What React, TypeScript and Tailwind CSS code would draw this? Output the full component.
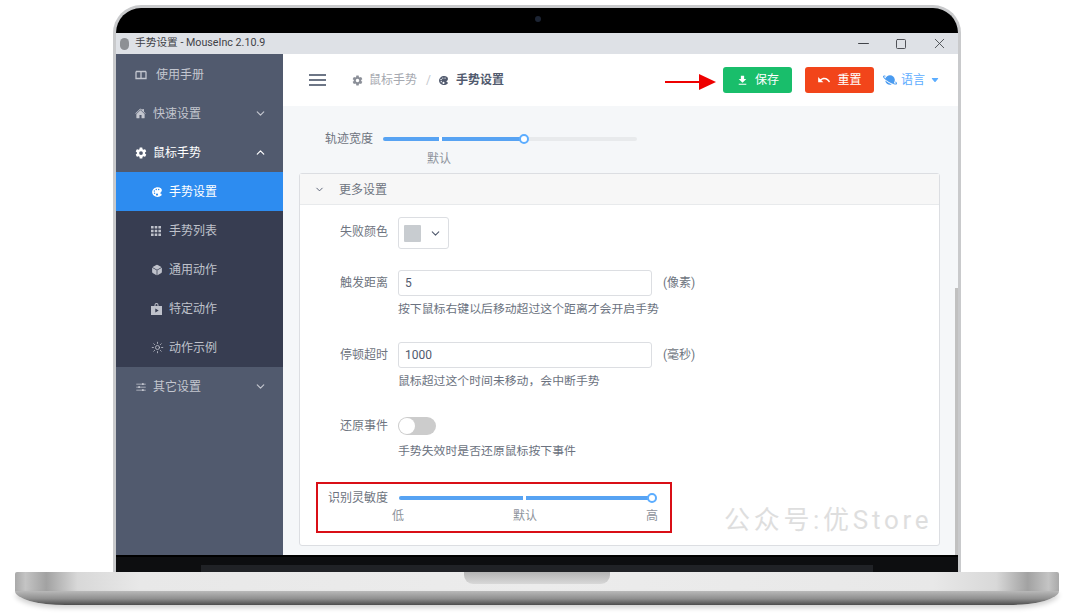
import { ChevronDown, ChevronUp, Minus, Square, X } from "lucide-react";
import { IoCaretDown, IoColorPalette, IoCube, IoHome, IoOptions, IoPlanet, IoSettingsSharp, IoSunnyOutline } from "react-icons/io5";
import { MdFileDownload, MdUndo } from "react-icons/md";

const cjk = "font-['Roboto','Noto_Sans_CJK_SC',sans-serif]";

function BookIcon() {
  return (
    <svg width="12" height="10" viewBox="0 0 12 10" fill="none" stroke="currentColor" strokeWidth="1.3">
      <path d="M1 1.5h4.2c.5 0 .8.3.8.8v6.2M11 1.5H6.8c-.5 0-.8.3-.8.8M1 1.5v7h10v-7" />
    </svg>
  );
}

function BagIcon() {
  return (
    <svg width="11" height="12" viewBox="0 0 11 12">
      <path fill="currentColor" fillRule="evenodd" d="M3.5 3V2a2 2 0 0 1 4 0v1H11v9H0V3zM4.5 3h2V2a1 1 0 0 0-2 0zM4.3 5.5v4l3.4-2z" />
    </svg>
  );
}

function GridIcon() {
  return (
    <svg width="10" height="10" viewBox="0 0 10 10" fill="currentColor">
      <path d="M0 0h2.6v2.6H0zM3.7 0h2.6v2.6H3.7zM7.4 0H10v2.6H7.4zM0 3.7h2.6v2.6H0zM3.7 3.7h2.6v2.6H3.7zM7.4 3.7H10v2.6H7.4zM0 7.4h2.6V10H0zM3.7 7.4h2.6V10H3.7zM7.4 7.4H10V10H7.4z" />
    </svg>
  );
}

function GroupRow({ icon, label, open, active }: { icon: React.ReactNode; label: string; open?: boolean; active?: boolean }) {
  return (
    <div className={`flex h-[39px] items-center pl-[19px] pr-[16px] ${active ? "text-white" : "text-[#c3c6cf]"}`}>
      <span className="flex w-[18px] justify-start">{icon}</span>
      <span className="flex-1">{label}</span>
      {open ? <ChevronUp size={13} strokeWidth={2.2} /> : <ChevronDown size={13} strokeWidth={2.2} />}
    </div>
  );
}

function SubRow({ icon, label, active }: { icon: React.ReactNode; label: string; active?: boolean }) {
  return (
    <div className={`flex h-[39px] items-center pl-[35px] ${active ? "bg-[#2d8cf0] text-white" : "text-[#bfc2cb]"}`}>
      <span className="flex w-[18px] justify-start">{icon}</span>
      <span>{label}</span>
    </div>
  );
}

function Slider({ width, value, tick }: { width: number; value: number; tick: number }) {
  return (
    <div className="relative h-[4px] rounded-full bg-[#e8eaec]" style={{ width }}>
      <div className="h-full rounded-full bg-[#57a3f3]" style={{ width: value }} />
      <div className="absolute top-0 h-full w-[3px] bg-white" style={{ left: tick }} />
      <div className="absolute top-[-3px] h-[10px] w-[10px] rounded-full border-2 border-[#5cadff] bg-white" style={{ left: value - 5 }} />
    </div>
  );
}

function Field({ label, value, unit, help }: { label: string; value: string; unit: string; help: string }) {
  return (
    <div className="flex">
      <span className="w-[98px] pr-[10px] pt-[3px] text-right leading-[20px]">{label}</span>
      <div>
        <div className="flex items-center">
          <div className="flex h-[26px] w-[254px] items-center rounded-[3px] border border-[#dcdee2] bg-white pl-[6px] text-[#515a6e]">{value}</div>
          <span className="ml-[11px]">{unit}</span>
        </div>
        <div className="mt-[3px] text-[11.87px] leading-[20px] text-[#6b7280]">{help}</div>
      </div>
    </div>
  );
}

export default function App() {
  return (
    <div className={`relative flex h-[614px] w-[1080px] flex-col items-center overflow-hidden bg-white pr-[6px] pt-[5px] text-[12px] text-[#6e7480] ${cjk}`}>
      {/* lid */}
      <div className="relative flex h-[567px] w-[848px] flex-col items-center rounded-t-[28px] border-x-[3px] border-t-[3px] border-[#c9cacc] bg-black">
        <div className="flex h-[25px] w-full items-center justify-center pb-[3px] pl-[2px]">
          <div className="h-[6px] w-[6px] rounded-full bg-[#1c2433]" />
        </div>

        {/* window */}
        <div className="flex h-[522px] w-full flex-col overflow-hidden bg-white">
          <div className="flex h-[21px] shrink-0 items-center bg-[#dee1e6] pl-[4px] text-[10.7px] text-[#3f4247]">
            <div className="h-[12px] w-[9px] rounded-full bg-[#8d9094]" />
            <span className="ml-[6px] flex-1">手势设置 - MouseInc 2.10.9</span>
            <span className="flex w-[38px] justify-center"><Minus size={17} strokeWidth={1.4} /></span>
            <span className="flex w-[38px] justify-center"><Square size={12} strokeWidth={1.8} /></span>
            <span className="flex w-[38px] justify-center"><X size={17} strokeWidth={1.2} /></span>
          </div>

          <div className="relative flex min-h-0 flex-1">
            <aside className="flex w-[167px] shrink-0 flex-col bg-[#515a6e] pt-px">
              <div className="flex h-[39px] items-center pl-[19px] text-[#c3c6cf]">
                <span className="flex w-[21px] justify-start"><BookIcon /></span>
                <span>使用手册</span>
              </div>
              <GroupRow icon={<IoHome size={11} />} label="快速设置" />
              <GroupRow icon={<IoSettingsSharp size={12} />} label="鼠标手势" open active />
              <SubRow icon={<IoColorPalette size={12} />} label="手势设置" active />
              <div className="bg-[#373d51]">
                <SubRow icon={<GridIcon />} label="手势列表" />
                <SubRow icon={<IoCube size={12} />} label="通用动作" />
                <SubRow icon={<BagIcon />} label="特定动作" />
                <SubRow icon={<IoSunnyOutline size={13} />} label="动作示例" />
              </div>
              <GroupRow icon={<IoOptions size={12} />} label="其它设置" />
            </aside>

            <main className="flex min-w-0 flex-1 flex-col bg-[#f5f7f9]">
              <header className="flex h-[52px] shrink-0 items-center bg-white pl-[26px] pr-[18px]">
                <div className="flex w-[17px] flex-col gap-[3px]">
                  <div className="h-[2px] bg-[#6d7686]" />
                  <div className="h-[2px] bg-[#6d7686]" />
                  <div className="h-[2px] bg-[#6d7686]" />
                </div>
                <IoSettingsSharp size={11} className="ml-[26px] text-[#8b8f98]" />
                <span className="ml-[6px] text-[#a6a9b0]">鼠标手势</span>
                <span className="ml-[9px] text-[#c5c8ce]">/</span>
                <IoColorPalette size={11} className="ml-[7px] text-[#515a6e]" />
                <span className="ml-[7px] font-bold text-[#515a6e]">手势设置</span>
                <div className="flex-1" />
                <div className="flex h-[26px] w-[69px] items-center justify-center rounded-[3px] bg-[#19be6b] text-white">
                  <MdFileDownload size={13} />
                  <span className="ml-[6px]">保存</span>
                </div>
                <div className="ml-[13px] flex h-[26px] w-[69px] items-center justify-center rounded-[3px] bg-[#f2451a] text-white">
                  <MdUndo size={14} />
                  <span className="ml-[6px]">重置</span>
                </div>
                <div className="ml-[9px] flex items-center text-[#5cadff]">
                  <IoPlanet size={14} className="text-[#4a9bf0]" />
                  <span className="ml-[4px]">语言</span>
                  <IoCaretDown size={10} className="ml-[5px]" />
                </div>
              </header>

              <div className="flex flex-1 flex-col pl-[16px] pr-[18px]">
                <div className="mt-[23px] flex items-center pl-[26px] text-[#6e7480]">
                  <span className="w-[58px] leading-[20px]">轨迹宽度</span>
                  <Slider width={254} value={141} tick={56} />
                </div>
                <div className="ml-[128px] mt-[2px] leading-[16px] text-[#8e939c]">默认</div>

                <section className="mt-[6px] flex h-[373px] flex-col rounded-[3px] border border-[#dcdee2] bg-white">
                  <div className="flex h-[31px] shrink-0 items-center border-b border-[#e8eaec] bg-[#f7f7f7] pl-[14px] pt-px">
                    <ChevronDown size={11} className="text-[#515a6e]" />
                    <span className="ml-[14px]">更多设置</span>
                  </div>

                  <div className="flex pt-[12px]">
                    <span className="w-[98px] pr-[10px] pt-[5px] text-right leading-[20px]">失败颜色</span>
                    <div className="flex h-[32px] w-[51px] items-center rounded-[3px] border border-[#dcdee2] pl-[5px]">
                      <div className="h-[17px] w-[17px] rounded-[1px] bg-[#c8ccd0]" />
                      <ChevronDown size={13} className="ml-[8px] text-[#515a6e]" />
                    </div>
                  </div>

                  <div className="mt-[21px]">
                    <Field label="触发距离" value="5" unit="(像素)" help="按下鼠标右键以后移动超过这个距离才会开启手势" />
                  </div>
                  <div className="mt-[23px]">
                    <Field label="停顿超时" value="1000" unit="(毫秒)" help="鼠标超过这个时间未移动，会中断手势" />
                  </div>

                  <div className="mt-[26px] flex">
                    <span className="w-[98px] pr-[10px] text-right leading-[18px]">还原事件</span>
                    <div>
                      <div className="flex h-[18px] w-[38px] items-center rounded-full bg-[#ccc] pl-[1px]">
                        <div className="h-[16px] w-[16px] rounded-full bg-white" />
                      </div>
                      <div className="mt-[6px] text-[11.87px] leading-[20px] text-[#6b7280]">手势失效时是否还原鼠标按下事件</div>
                    </div>
                  </div>

                  <div className="ml-[16px] mt-[21px] h-[51px] w-[356px] border-2 border-[#d90f17] pl-[10px] pt-[4px]">
                    <div className="flex items-center">
                      <span className="w-[71px] leading-[20px]">识别灵敏度</span>
                      <Slider width={258} value={253} tick={124} />
                    </div>
                    <div className="ml-[64px] flex w-[266px] justify-between leading-[16px] text-[#8e939c]">
                      <span>低</span>
                      <span>默认</span>
                      <span>高</span>
                    </div>
                  </div>
                </section>
              </div>
            </main>

            {/* scrollbar */}
            <div className="absolute bottom-0 right-0 h-[267px] w-[3px] bg-[#c1c1c1]" />
            {/* arrow pointing at the save button */}
            <svg className="absolute left-[549px] top-[20px]" width="52" height="16" viewBox="0 0 52 16">
              <path d="M0 7h36v2H0z" fill="#ee0000" />
              <path d="M34 0l17 8-17 8z" fill="#ee0000" />
            </svg>
            {/* watermark */}
            <div className="absolute left-[608px] top-[449px] text-[26px] leading-[34px] tracking-[3.7px] text-[#dedede]">公众号:优Store</div>
          </div>
        </div>

        {/* chin */}
        <div className="flex w-full flex-1 items-end justify-center rounded-none bg-[#0d0e10] [box-shadow:inset_0_2px_0_#000]">
          <div className="h-[7px] w-[672px] bg-[#202226]" />
        </div>
      </div>

      {/* base */}
      <div className="relative w-[1044px] shrink-0">
        <div className="flex h-[19px] justify-center rounded-tl-[2px] rounded-tr-[2px] bg-[linear-gradient(90deg,#a9a9a9_0%,#c4c4c4_1%,#a2a2a2_3%,#d8d8d8_6%,#e8e8e8_12%,#ececec_50%,#e8e8e8_88%,#d8d8d8_94%,#a2a2a2_97%,#c4c4c4_99%,#a9a9a9_100%)]">
          <div className="h-[12px] w-[146px] rounded-b-[9px] bg-[linear-gradient(180deg,#b4b4b4,#d8d8d8)]" />
        </div>
        <div className="h-[14px] rounded-bl-[50px_14px] rounded-br-[50px_14px] bg-[linear-gradient(180deg,#b9b9b9,#8f8f8f_55%,#4d4d4d)] [box-shadow:0_3px_5px_rgba(0,0,0,0.18)]" />
      </div>
    </div>
  );
}
